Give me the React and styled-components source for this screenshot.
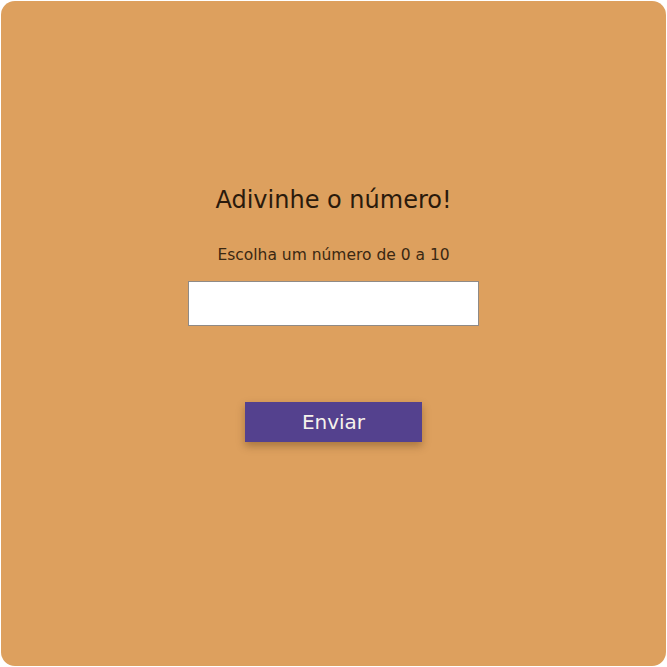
import styled, { createGlobalStyle } from "styled-components";

const GlobalStyle = createGlobalStyle`
  html, body {
    margin: 0;
    padding: 0;
    background: #ffffff;
  }
`;

const Page = styled.div`
  width: 667px;
  height: 667px;
  padding: 1px;
  box-sizing: border-box;
`;

const Card = styled.main`
  height: 100%;
  background: #dda05e;
  border-radius: 14px;
  display: flex;
  flex-direction: column;
  align-items: center;
  padding-top: 183px;
  box-sizing: border-box;
  font-family: "DejaVu Sans", "Liberation Sans", sans-serif;
  color: #2a1a0c;
`;

const Title = styled.h1`
  margin: 0;
  font-size: 24px;
  font-weight: 400;
  line-height: 32px;
`;

const Hint = styled.p`
  margin: 29px 0 0;
  font-size: 15.5px;
  line-height: 20px;
  color: #3a2812;
`;

const NumberInput = styled.input`
  margin-top: 16px;
  width: 291px;
  height: 45px;
  box-sizing: border-box;
  border: 1px solid #8f8a86;
  background: #ffffff;
  outline: none;
`;

const SubmitButton = styled.button`
  margin-top: 76px;
  width: 177px;
  height: 40px;
  border: none;
  background: #54418e;
  color: #f6f2ec;
  font-family: "DejaVu Sans", "Liberation Sans", sans-serif;
  font-size: 20px;
  box-shadow: 0 4px 8px rgba(70, 40, 10, 0.35);
  cursor: pointer;
`;

export default function App() {
  return (
    <>
      <GlobalStyle />
      <Page>
        <Card>
          <Title>Adivinhe o número!</Title>
          <Hint>Escolha um número de 0 a 10</Hint>
          <NumberInput type="text" />
          <SubmitButton>Enviar</SubmitButton>
        </Card>
      </Page>
    </>
  );
}
